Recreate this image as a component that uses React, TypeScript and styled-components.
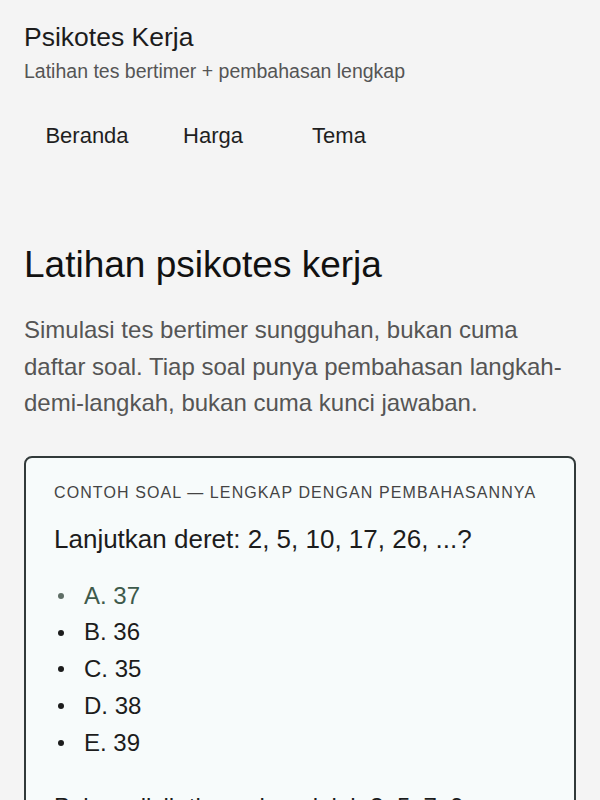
import React from 'react'
import styled, { createGlobalStyle } from 'styled-components'
// ______________________________________________________
//
const GlobalStyle = createGlobalStyle`
  html, body {
    margin: 0;
    padding: 0;
    background: #f4f4f4;
  }
  body {
    font-family: 'Liberation Sans', Arial, sans-serif;
    color: #1a1a1a;
  }
`
// ______________________________________________________
//
const Page = styled.div`
  padding: 22px 24px 0;
  height: 800px;
  overflow: hidden;
  box-sizing: border-box;
`

const Header = styled.header`
  display: flex;
  flex-direction: column;
`

const SiteTitle = styled.div`
  font-size: 26.5px;
  line-height: 31px;
  color: #1c1c1c;
`

const Tagline = styled.div`
  margin-top: 6px;
  font-size: 19.5px;
  line-height: 25px;
  color: #555;
`

const Nav = styled.nav`
  display: flex;
  margin-top: 27px;
`

const NavLink = styled.a`
  width: 126px;
  padding: 12px 0;
  font-size: 22px;
  line-height: 26px;
  text-align: center;
  color: #1f1f1f;
  text-decoration: none;
`

const Main = styled.main`
  margin-top: 82px;
`

const Heading = styled.h1`
  margin: 0;
  font-size: 37px;
  line-height: 44px;
  font-weight: 400;
  color: #111;
`

const Lead = styled.p`
  margin: 25px 0 0;
  font-size: 24px;
  line-height: 36.5px;
  color: #555;
`

const Card = styled.section`
  margin-top: 34px;
  padding: 23px 28px;
  border: 2px solid #323a3a;
  border-radius: 8px;
  background: #f7fbfb;
`

const Eyebrow = styled.div`
  font-size: 16px;
  line-height: 24px;
  letter-spacing: 1.1px;
  color: #444;
`

const Question = styled.div`
  margin-top: 16px;
  font-size: 26px;
  line-height: 36px;
  color: #1c1c1c;
`

const Options = styled.ul`
  margin: 21px 0 0;
  padding-left: 4px;
  list-style: none;
  font-size: 24px;
  line-height: 36.75px;
`

const Option = styled.li<{ $muted?: boolean }>`
  display: flex;
  align-items: center;
  gap: 20px;
  color: ${(p) => (p.$muted ? '#3e5a4b' : '#1c1c1c')};
  &::before {
    content: '';
    width: 6px;
    height: 6px;
    border-radius: 50%;
    background: ${(p) => (p.$muted ? '#5f6e66' : '#1c1c1c')};
  }
`

const Explain = styled.p`
  margin: 28px 0 0;
  font-size: 24px;
  line-height: 36px;
  color: #1c1c1c;
`
// ______________________________________________________
//
const options = ['A. 37', 'B. 36', 'C. 35', 'D. 38', 'E. 39']

const App: React.FC = () => (
  <>
    <GlobalStyle />
    <Page>
      <Header>
        <SiteTitle>Psikotes Kerja</SiteTitle>
        <Tagline>Latihan tes bertimer + pembahasan lengkap</Tagline>
        <Nav>
          <NavLink href="#">Beranda</NavLink>
          <NavLink href="#">Harga</NavLink>
          <NavLink href="#">Tema</NavLink>
        </Nav>
      </Header>
      <Main>
        <Heading>Latihan psikotes kerja</Heading>
        <Lead>
          Simulasi tes bertimer sungguhan, bukan cuma daftar soal. Tiap soal
          punya pembahasan langkah-demi-langkah, bukan cuma kunci jawaban.
        </Lead>
        <Card>
          <Eyebrow>CONTOH SOAL — LENGKAP DENGAN PEMBAHASANNYA</Eyebrow>
          <Question>Lanjutkan deret: 2, 5, 10, 17, 26, ...?</Question>
          <Options>
            {options.map((o, i) => (
              <Option key={o} $muted={i === 0}>
                {o}
              </Option>
            ))}
          </Options>
          <Explain>Pola: selisih tiap suku adalah 3, 5, 7, 9.</Explain>
        </Card>
      </Main>
    </Page>
  </>
)
// ______________________________________________________
//
export default App
